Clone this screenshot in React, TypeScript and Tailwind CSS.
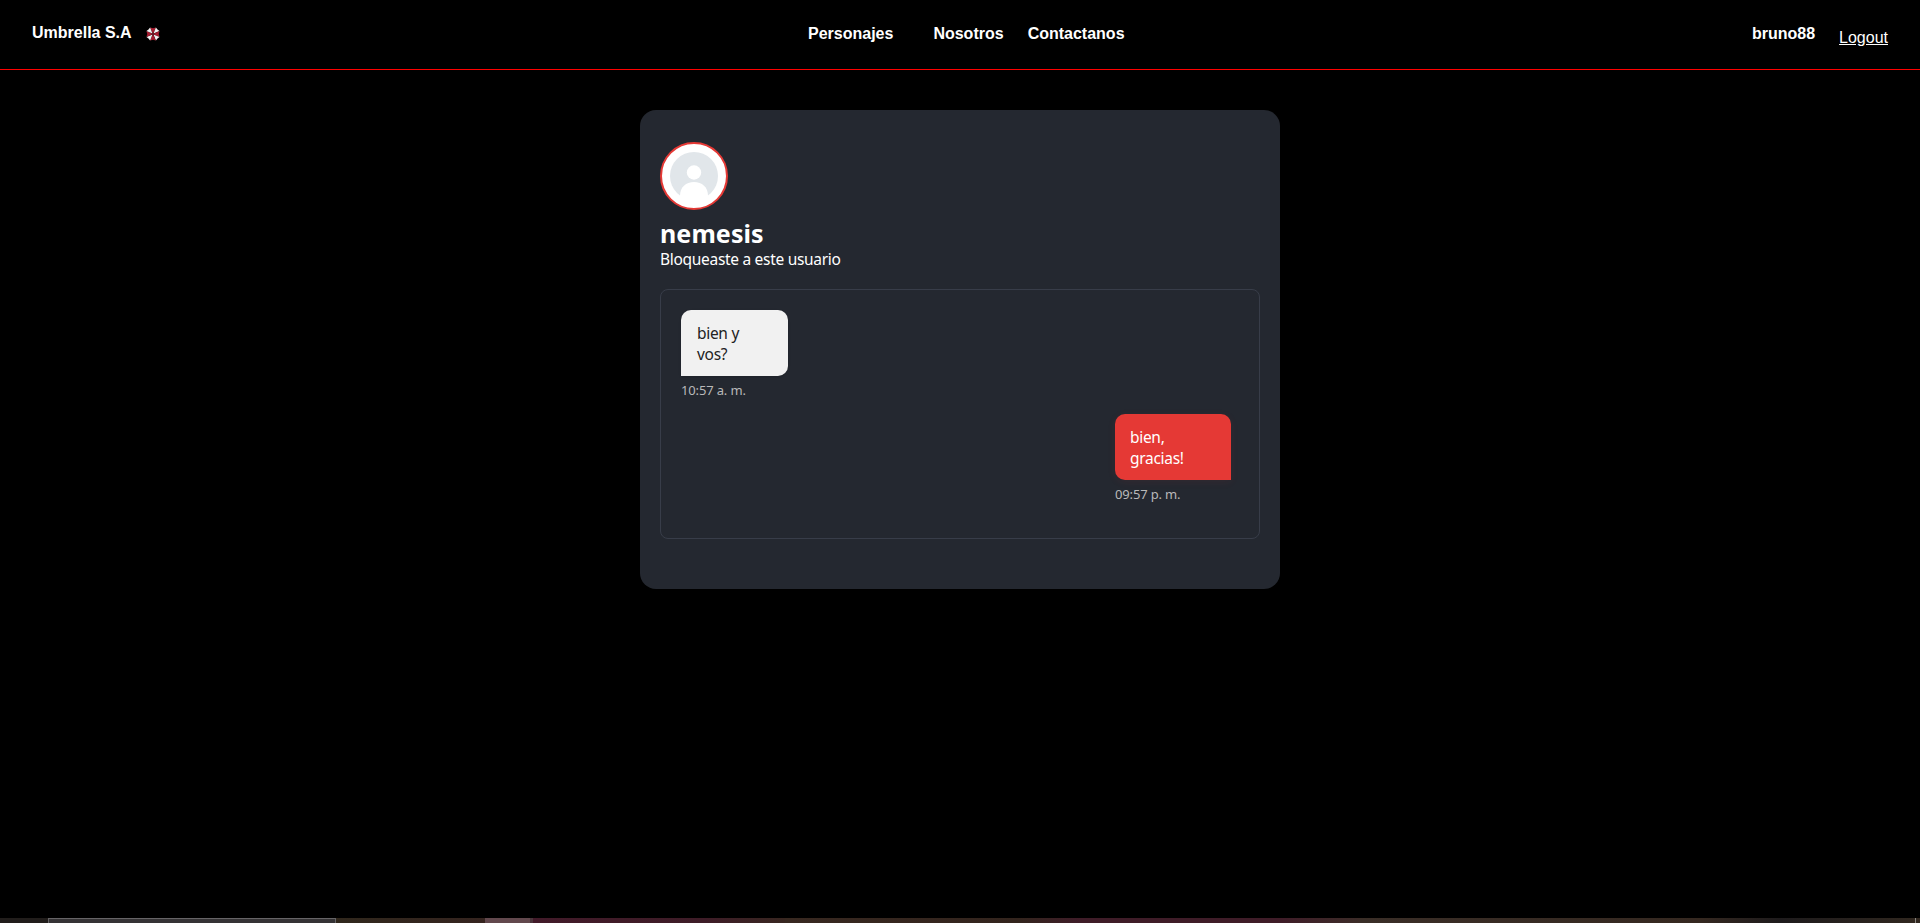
import React from "react";

function UmbrellaLogo() {
  const angles = [0, 90, 180, 270];
  return (
    <svg className="h-[14px] w-[14px]" viewBox="-7 -7 14 14" aria-label="Umbrella">
      {angles.map((a) => (
        <g key={a} transform={`rotate(${a})`}>
          <path d="M0 0 L-2.9 -6.6 L0 -5.7 L2.9 -6.6 Z" fill="#a81c30" />
          <path d="M0.5 -0.5 L2.9 -6.5 L4.5 -4.5 L6.5 -2.9 Z" fill="#f4f1f2" />
        </g>
      ))}
      <circle r="0.8" fill="#6b1622" />
    </svg>
  );
}

function Header() {
  return (
    <header className="grid h-[70px] grid-cols-[776px_1fr_auto] border-b border-[#ff0000] px-8 font-['Liberation_Sans',Arial,sans-serif] text-base leading-6 text-white">
      <div className="flex items-start gap-[14px] pt-[21px]">
        <span className="font-bold">Umbrella S.A</span>
        <span className="pt-[6px]">
          <UmbrellaLogo />
        </span>
      </div>
      <nav className="flex items-start pt-[22px] font-bold">
        <a className="mr-10">Personajes</a>
        <a className="mr-6">Nosotros</a>
        <a>Contactanos</a>
      </nav>
      <div className="flex items-start gap-6 pt-[22px]">
        <span className="font-bold">bruno88</span>
        <a className="pt-1 underline">Logout</a>
      </div>
    </header>
  );
}

function Avatar() {
  return (
    <svg className="block h-[68px] w-[68px]" viewBox="0 0 68 68" aria-label="nemesis">
      <circle cx="34" cy="34" r="33" fill="#fff" stroke="#e53935" strokeWidth="2" />
      <circle cx="34" cy="34" r="24" fill="#e1e6ea" />
      <circle cx="34" cy="30.5" r="7.2" fill="#fff" />
      <path d="M20 54 C20 45 26 40 34 40 S48 45 48 54 L41 59 H27 Z" fill="#fff" />
    </svg>
  );
}

function Taskbar() {
  return (
    <footer className="flex h-[5px] bg-[#30271f]">
      <div className="w-12 bg-[#211d1b]" />
      <div className="w-[288px] border-x border-t border-[#666466] bg-[#353335]" />
      <div className="w-[149px] bg-linear-to-r from-[#30271c] to-[#35241f]" />
      <div className="w-[45px] bg-[#62484d]" />
      <div className="w-[3px] bg-[#4b353b]" />
      <div className="w-[172px] bg-linear-to-r from-[#421a29] to-[#3e1c27]" />
      <div className="w-[80px] bg-linear-to-r from-[#3e1c27] to-[#382620]" />
      <div className="w-[235px] bg-linear-to-r from-[#382820] to-[#33241d]" />
      <div className="w-[60px] bg-linear-to-r from-[#33241d] to-[#3f1c28]" />
      <div className="w-[200px] bg-[#3f1c28]" />
      <div className="w-[80px] bg-linear-to-r from-[#3f1c28] to-[#3c2c28]" />
      <div className="w-[340px] bg-linear-to-r from-[#3a2e27] to-[#352820]" />
      <div className="w-[80px] bg-linear-to-r from-[#352820] to-[#1e1b1c]" />
      <div className="w-[135px] bg-linear-to-r from-[#1e1b1c] to-[#30271f]" />
      <div className="w-px bg-[#8a8580]" />
    </footer>
  );
}

export default function App() {
  return (
    <div className="flex h-[923px] flex-col overflow-hidden bg-black">
      <Header />
      <main className="flex flex-1 items-start justify-center pt-10 font-['Noto_Sans',sans-serif]">
        <section className="h-[479px] w-[640px] rounded-2xl bg-[#242830] px-5 pt-8 text-white">
          <Avatar />
          <h1 className="mt-[5px] text-[25px] leading-9 font-bold tracking-[0.1px]">nemesis</h1>
          <p className="-mt-1 text-[15.5px] leading-6 tracking-[-0.3px]">Bloqueaste a este usuario</p>
          <div className="mt-[18px] h-[250px] rounded-lg border border-[#383d49] p-5 text-[15.5px] leading-[21px] tracking-[-0.3px]">
            <div className="flex flex-col items-start">
              <div className="h-[66px] w-[107px] rounded-[10px] rounded-bl-none bg-[#f1f1f1] px-4 pt-[13px] text-[#222] shadow-sm">
                bien y<br />vos?
              </div>
              <time className="mt-1 text-[13px] leading-5 tracking-[-0.15px] text-[#b9b9b9]">10:57 a. m.</time>
            </div>
            <div className="mt-[14px] mr-2 flex justify-end">
              <div className="w-[116px]">
                <div className="h-[66px] rounded-[10px] rounded-br-none bg-[#e53935] px-[15px] pt-[13px] shadow-[0_2px_8px_rgba(229,57,53,0.08)]">
                  bien,<br />gracias!
                </div>
                <time className="mt-1 block text-[13px] leading-5 tracking-[-0.15px] text-[#b9b9b9]">09:57 p. m.</time>
              </div>
            </div>
          </div>
        </section>
      </main>
      <Taskbar />
    </div>
  );
}
